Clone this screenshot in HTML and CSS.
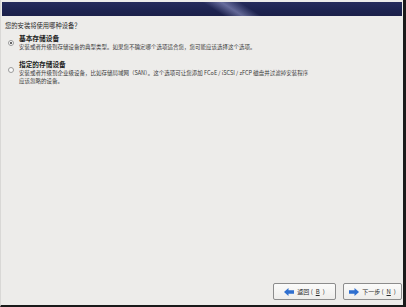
FILE: index.html
```html
<!DOCTYPE html>
<html lang="zh-CN">
<head>
<meta charset="utf-8">
<link rel="stylesheet" href="styles.css">
</head>
<body>
<div class="frame">
  <div class="banner"><div class="streak"></div></div>
  <div class="content">
    <p class="question">您的安装将使用哪种设备？</p>
    <div class="option">
      <span class="radio checked"></span>
      <div class="opt-text">
        <div class="opt-title">基本存储设备</div>
        <div class="opt-desc">安装或者升级到存储设备的典型类型。如果您不确定哪个选项适合您，您可能应该选择这个选项。</div>
      </div>
    </div>
    <div class="option second">
      <span class="radio"></span>
      <div class="opt-text">
        <div class="opt-title">指定的存储设备</div>
        <div class="opt-desc">安装或者升级到企业级设备，比如存储局域网（SAN）。这个选项可让您添加 FCoE / iSCSI / zFCP 磁盘并过滤掉安装程序<br>应该忽略的设备。</div>
      </div>
    </div>
  </div>
  <div class="buttons">
    <button class="btn"><svg width="10" height="8" viewBox="0 0 10 8"><path d="M0 4 L4.5 0 V2.3 H10 V5.7 H4.5 V8 Z" fill="#2f6fcf"/></svg>返回 (<u>B</u>)</button>
    <button class="btn"><svg width="10" height="8" viewBox="0 0 10 8"><path d="M10 4 L5.5 0 V2.3 H0 V5.7 H5.5 V8 Z" fill="#2f6fcf"/></svg>下一步 (<u>N</u>)</button>
  </div>
</div>
</body>
</html>
```
FILE: styles.css
```css
* { box-sizing: border-box; }
html, body { margin: 0; padding: 0; background: #2a2a2a; }
body { width: 406px; height: 307px; overflow: hidden; font-family: "Noto Sans CJK SC", "Liberation Sans", sans-serif; }
.frame {
  width: 406px; height: 307px;
  background: #edecea;
  border-left: 1px solid #d9d8d6;
  border-right: 3px solid #1a1a1a;
  border-bottom: 2px solid #1a1a1a;
  display: flex; flex-direction: column;
  padding: 2px 0 0 1px;
}
.banner {
  height: 14px; margin-right: 1px;
  background: linear-gradient(180deg, #262c5c 0%, #1d2350 60%, #1b2049 100%);
  position: relative; overflow: hidden;
}
.streak {
  position: absolute; top: -4px; left: 205px; width: 50px; height: 22px;
  background: linear-gradient(100deg, rgba(255,255,255,0) 15%, rgba(170,175,225,0.5) 50%, rgba(255,255,255,0) 85%);
  transform: skewX(60deg);
}
.content { flex: 1; padding: 5px 0 0 3px; }
.question { margin: 0 0 4px 0; font-size: 6.3px; line-height: 9px; color: #2b2b2b; }
.option { display: flex; align-items: flex-start; }
.option.second { margin-top: 9px; }
.radio {
  width: 6px; height: 6px; border-radius: 50%;
  border: 1px solid #9a9a9a; background: #fafafa;
  margin: 6px 5px 0 3px; flex: none; position: relative;
}
.option.second .radio { margin-top: 7px; }
.radio.checked::after {
  content: ""; position: absolute; left: 1px; top: 1px; width: 2px; height: 2px; border-radius: 50%; background: #333;
}
.opt-title { font-size: 6.7px; font-weight: bold; line-height: 8px; color: #1c1c1c; }
.opt-desc { font-size: 5.5px; line-height: 8px; color: #3a3a3a; margin-top: 1px; }
.buttons { display: flex; justify-content: flex-end; gap: 7px; padding: 0 1px 5px 0; }
.btn {
  height: 17px; display: flex; align-items: center; justify-content: center; gap: 3px;
  border: 1px solid #8c8c8c; border-radius: 2px;
  background: linear-gradient(180deg, #fbfbfa 0%, #eeedeb 100%);
  font-family: "Noto Sans CJK SC", "Liberation Sans", sans-serif;
  font-size: 6px; color: #2a2a2a; padding: 0;
}
.btn:first-child { width: 63px; }
.btn:last-child { width: 59px; }
.btn u { text-decoration: underline; }
```
